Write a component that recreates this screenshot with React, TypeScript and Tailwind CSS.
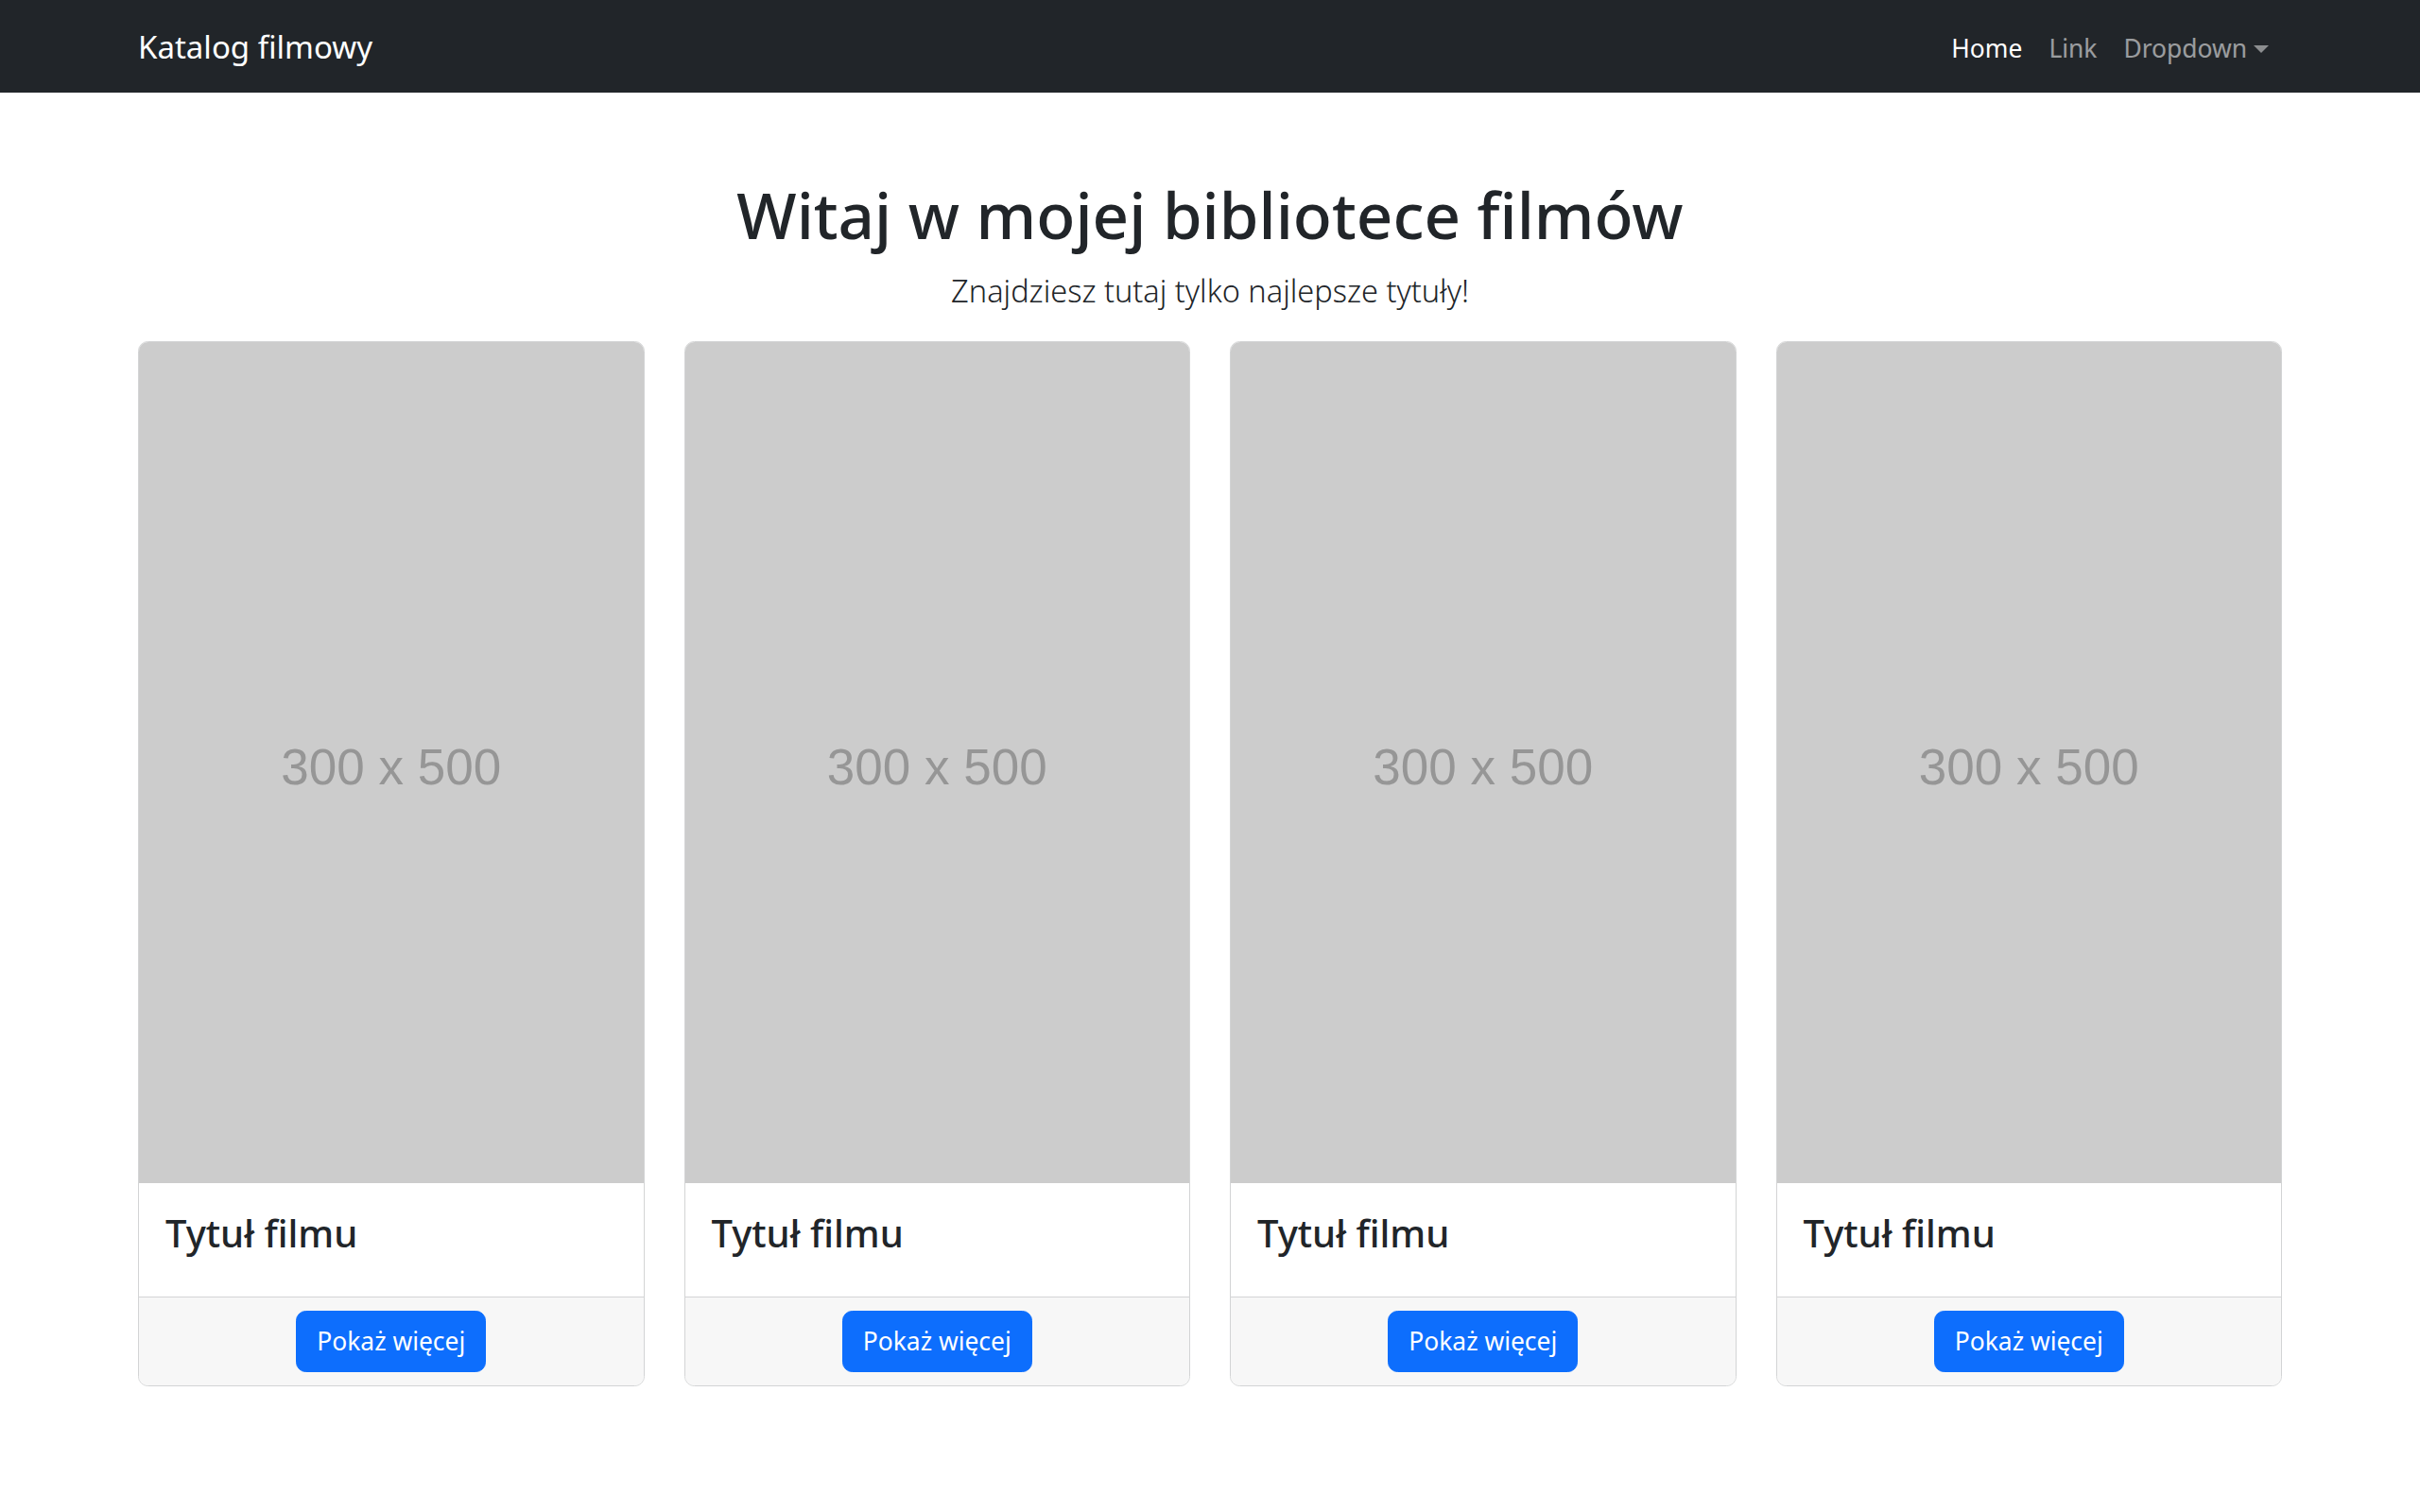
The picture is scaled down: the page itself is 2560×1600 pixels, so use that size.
import React from "react";

function Card() {
  return (
    <div className="flex flex-col border border-[#d3d4d5] rounded-[10.5px] overflow-hidden bg-white">
      <div className="h-[890px] bg-[#cccccc] flex items-center justify-center">
        <span className="font-['Liberation_Sans',Arial,sans-serif] text-[53px] text-[#969696] leading-none pt-[10px]">
          300 x 500
        </span>
      </div>
      <div className="p-[28px]">
        <h4 className="text-[40px] font-medium leading-[50.4px] mb-[14px] text-[#212529]">Tytuł filmu</h4>
      </div>
      <div className="border-t border-[#d3d4d5] bg-[#f7f7f7] px-[28px] py-[14px] flex justify-center">
        <button className="bg-[#0d6efd] border-[1.75px] border-[#0d6efd] text-white text-[26.4px] leading-[42px] px-[21px] py-[10.5px] rounded-[10.5px]">
          Pokaż więcej
        </button>
      </div>
    </div>
  );
}

export default function App() {
  return (
    <div className="min-h-screen bg-white font-['Noto_Sans',sans-serif] text-[#212529]">
      <nav className="h-[98px] bg-[#212529]">
        <div className="mx-auto w-[2310px] px-[21px] h-full flex items-center justify-between pt-[3px]">
          <a className="text-[33px] text-white leading-[52.5px]">Katalog filmowy</a>
          <ul className="flex items-center text-[26.4px] leading-[42px]">
            <li className="px-[14px] text-white">Home</li>
            <li className="px-[14px] text-white/55">Link</li>
            <li className="px-[14px] text-white/55 flex items-center">
              Dropdown
              <span className="ml-[7px] mt-[2px] w-0 h-0 border-t-[8.4px] border-t-[#8c8e90] border-x-[8.4px] border-x-transparent" />
            </li>
          </ul>
        </div>
      </nav>
      <main className="mx-auto w-[2310px] px-[21px] pt-[84px]">
        <h1 className="text-center text-[67.3px] font-medium leading-[84px] pt-[3px] mb-[11px]">
          Witaj w mojej bibliotece filmów
        </h1>
        <p className="text-center text-[32.5px] font-light leading-[52.5px] pt-[2px] mb-[26px]">
          Znajdziesz tutaj tylko najlepsze tytuły!
        </p>
        <div className="grid grid-cols-4 gap-[42px]">
          <Card />
          <Card />
          <Card />
          <Card />
        </div>
      </main>
    </div>
  );
}
